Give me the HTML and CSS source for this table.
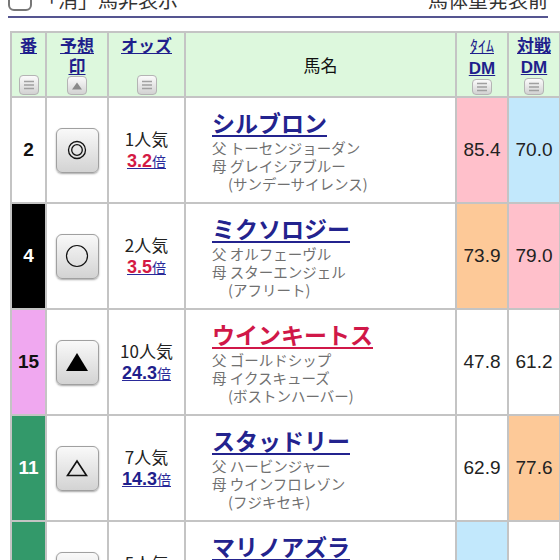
FILE: index.html
```html
<!DOCTYPE html>
<html lang="ja">
<head>
<meta charset="utf-8">
<title>出馬表</title>
<link rel="stylesheet" href="styles.css">
</head>
<body>
<div class="top">
  <label class="chk"><span class="box"></span><span class="chk-text">「消」馬非表示</span></label>
  <span class="status">馬体重発表前</span>
</div>
<div class="rule"></div>

<table class="race">
  <colgroup>
    <col class="c-num"><col class="c-mark"><col class="c-odds"><col class="c-name"><col class="c-dm"><col class="c-dm2">
  </colgroup>
  <thead>
    <tr class="hrow">
      <th><div class="hd"><a class="hl" href="#">番</a><span class="sort"><svg width="12" height="10" viewBox="0 0 12 10"><path d="M1 1.5h10M1 5h10M1 8.5h10" stroke="#a0a0a0" stroke-width="1.4"/></svg></span></div></th>
      <th><div class="hd"><a class="hl" href="#">予想<br>印</a><span class="sort"><svg width="12" height="10" viewBox="0 0 12 10"><path d="M6 1.5L11 8.5H1Z" fill="#8a8a8a"/></svg></span></div></th>
      <th><div class="hd"><a class="hl" href="#">オッズ</a><span class="sort"><svg width="12" height="10" viewBox="0 0 12 10"><path d="M1 1.5h10M1 5h10M1 8.5h10" stroke="#a0a0a0" stroke-width="1.4"/></svg></span></div></th>
      <th class="h-name">馬名</th>
      <th><div class="hd"><a class="hl" href="#"><span class="hk">ﾀｲﾑ</span><br><span class="dm">DM</span></a><span class="sort"><svg width="12" height="10" viewBox="0 0 12 10"><path d="M1 1.5h10M1 5h10M1 8.5h10" stroke="#a0a0a0" stroke-width="1.4"/></svg></span></div></th>
      <th><div class="hd"><a class="hl" href="#">対戦<br><span class="dm">DM</span></a><span class="sort"><svg width="12" height="10" viewBox="0 0 12 10"><path d="M1 1.5h10M1 5h10M1 8.5h10" stroke="#a0a0a0" stroke-width="1.4"/></svg></span></div></th>
    </tr>
  </thead>
  <tbody>
    <tr class="row">
      <td class="num w1">2</td>
      <td class="mark"><span class="mbtn"><svg width="24" height="24" viewBox="0 0 24 24"><circle cx="12" cy="12" r="8.5" fill="none" stroke="#111" stroke-width="1.3"/><circle cx="12" cy="12" r="5.3" fill="none" stroke="#111" stroke-width="1.3"/></svg></span></td>
      <td class="odds"><div class="pop">1人気</div><a class="ol" href="#"><b class="hot">3.2</b>倍</a></td>
      <td class="name"><a class="hn" href="#">シルブロン</a><div class="ped">父 トーセンジョーダン</div><div class="ped">母 グレイシアブルー</div><div class="ped bms">(サンデーサイレンス)</div></td>
      <td class="dmv pink">85.4</td>
      <td class="dmv blue">70.0</td>
    </tr>
    <tr class="row">
      <td class="num w2">4</td>
      <td class="mark"><span class="mbtn"><svg width="26" height="26" viewBox="0 0 26 26"><circle cx="13" cy="13" r="10.5" fill="none" stroke="#111" stroke-width="1.2"/></svg></span></td>
      <td class="odds"><div class="pop">2人気</div><a class="ol" href="#"><b class="hot">3.5</b>倍</a></td>
      <td class="name"><a class="hn" href="#">ミクソロジー</a><div class="ped">父 オルフェーヴル</div><div class="ped">母 スターエンジェル</div><div class="ped bms">(アフリート)</div></td>
      <td class="dmv orange">73.9</td>
      <td class="dmv pink">79.0</td>
    </tr>
    <tr class="row">
      <td class="num w8">15</td>
      <td class="mark"><span class="mbtn"><svg width="26" height="22" viewBox="0 0 26 22"><path d="M13 2L24 20H2Z" fill="#000"/></svg></span></td>
      <td class="odds"><div class="pop">10人気</div><a class="ol" href="#"><b>24.3</b>倍</a></td>
      <td class="name"><a class="hn red" href="#">ウインキートス</a><div class="ped">父 ゴールドシップ</div><div class="ped">母 イクスキューズ</div><div class="ped bms">(ボストンハーバー)</div></td>
      <td class="dmv">47.8</td>
      <td class="dmv">61.2</td>
    </tr>
    <tr class="row">
      <td class="num w6">11</td>
      <td class="mark"><span class="mbtn"><svg width="24" height="20" viewBox="0 0 24 20"><path d="M12 3L21.5 17.5H2.5Z" fill="none" stroke="#111" stroke-width="1.6" stroke-linejoin="miter"/></svg></span></td>
      <td class="odds"><div class="pop">7人気</div><a class="ol" href="#"><b>14.3</b>倍</a></td>
      <td class="name"><a class="hn" href="#">スタッドリー</a><div class="ped">父 ハービンジャー</div><div class="ped">母 ウインフロレゾン</div><div class="ped bms">(フジキセキ)</div></td>
      <td class="dmv">62.9</td>
      <td class="dmv orange">77.6</td>
    </tr>
    <tr class="row">
      <td class="num w6">12</td>
      <td class="mark"><span class="mbtn"></span></td>
      <td class="odds"><div class="pop">5人気</div><a class="ol" href="#"><b>9.8</b>倍</a></td>
      <td class="name"><a class="hn" href="#">マリノアズラ</a><div class="ped">父 ロードカナロア</div><div class="ped">母 マリノ</div><div class="ped bms">(キングカメハメハ)</div></td>
      <td class="dmv blue">68.1</td>
      <td class="dmv">72.4</td>
    </tr>
  </tbody>
</table>
</body>
</html>
```

FILE: styles.css
```css
html, body {
  margin: 0;
  padding: 0;
  background: #fff;
  overflow: hidden;
}
body {
  font-family: "Liberation Sans", "Noto Sans CJK JP", sans-serif;
  color: #222;
  width: 560px;
  height: 560px;
}
.top {
  display: flex;
  justify-content: space-between;
  align-items: flex-end;
  margin: -11px 12px 0 8px;
  height: 22px;
  font-size: 20px;
  line-height: 20px;
  color: #333;
}
.chk {
  display: flex;
  align-items: flex-end;
  gap: 6px;
}
.box {
  display: block;
  width: 20px;
  height: 20px;
  border: 2px solid #777;
  border-radius: 6px;
  background: #fff;
}
.chk-text, .status {
  font-family: "Noto Sans CJK JP", sans-serif;
  margin-bottom: 1px;
}
.rule {
  margin: 5px 12px 0 8px;
  height: 2px;
  background: #555590;
}
.race {
  margin: 13px 0 0 10px;
  border-collapse: collapse;
  table-layout: fixed;
  width: 549px;
  border: 2px solid #c4c4c4;
}
.race td, .race th {
  border: 2px solid #c4c4c4;
  padding: 0;
}
.c-num { width: 35px; }
.c-mark { width: 62px; }
.c-odds { width: 77px; }
.c-name { width: 271px; }
.c-dm { width: 52px; }
.c-dm2 { width: 52px; }
.hrow { height: 65px; }
.hrow th {
  background: #ddf8dd;
  vertical-align: top;
  font-weight: normal;
}
.hd {
  display: flex;
  flex-direction: column;
  align-items: center;
  justify-content: space-between;
  height: 62px;
  padding-top: 1px;
  box-sizing: border-box;
}
.hl {
  color: #1f1f8c;
  font-family: "Noto Sans CJK JP", sans-serif;
  font-weight: bold;
  font-size: 17px;
  line-height: 21px;
  text-align: center;
  text-decoration: underline;
}
.hk {
  font-weight: normal;
  font-size: 16px;
}
.dm {
  font-family: "Liberation Sans", sans-serif;
  font-weight: bold;
  font-size: 17px;
}
.sort {
  display: flex;
  align-items: center;
  justify-content: center;
  width: 18px;
  height: 18px;
  border: 1px solid #b4b4b4;
  border-radius: 4px;
  background: linear-gradient(#fbfbfb, #d2d2d2);
  margin-bottom: 0;
}
.h-name {
  vertical-align: middle !important;
  font-family: "Noto Sans CJK JP", sans-serif;
  font-size: 17px;
  color: #111;
}
.row { height: 106px; }
.num {
  text-align: center;
  font-weight: bold;
  font-size: 19px;
}
.w1 { background: #fff; color: #111; }
.w2 { background: #000; color: #fff; }
.w8 { background: #f0a8f0; color: #111; }
.w6 { background: #33996a; color: #fff; }
.mark { text-align: center; }
.mbtn {
  display: inline-flex;
  align-items: center;
  justify-content: center;
  width: 41px;
  height: 43px;
  border: 1px solid #a0a0a0;
  border-radius: 6px;
  background: linear-gradient(#f9f9f9, #d3d3d3);
  box-shadow: 0 1px 2px rgba(0, 0, 0, 0.35);
  vertical-align: middle;
}
.odds {
  text-align: center;
}
.pop {
  font-family: "Noto Sans CJK JP", sans-serif;
  font-size: 17px;
  line-height: 22px;
  color: #222;
}
.ol {
  color: #2a2a9a;
  font-family: "Noto Sans CJK JP", sans-serif;
  font-size: 14px;
  line-height: 22px;
  text-decoration: underline;
}
.ol b {
  font-family: "Liberation Sans", sans-serif;
  font-size: 18px;
  color: #1f1f8c;
}
.ol b.hot { color: #d41a44; }
.name {
  padding-left: 26px !important;
  vertical-align: middle;
}
.hn {
  display: inline-block;
  font-family: "Noto Sans CJK JP", sans-serif;
  font-weight: bold;
  font-size: 23px;
  line-height: 28px;
  color: #23238e;
  text-decoration: underline;
  text-decoration-thickness: 2px;
  text-underline-offset: 3px;
  margin-bottom: 3px;
}
.hn.red { color: #d01848; }
.ped {
  font-family: "Noto Sans CJK JP", sans-serif;
  font-size: 14.5px;
  line-height: 18px;
  color: #707070;
  white-space: nowrap;
}
.bms { padding-left: 16px; }
.dmv {
  text-align: center;
  font-size: 19px;
  color: #222;
}
.pink { background: #ffc0cb; }
.blue { background: #c2e8fc; }
.orange { background: #fdc998; }
```
